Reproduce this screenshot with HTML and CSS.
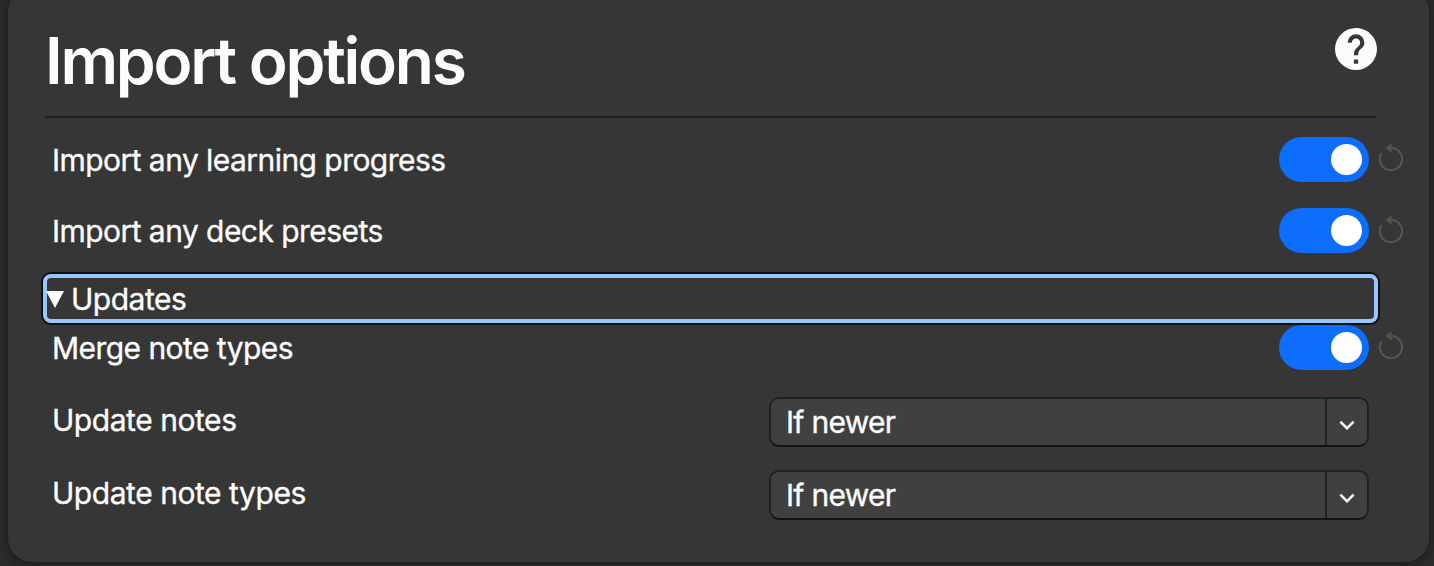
FILE: index.html
```html
<!DOCTYPE html>
<html lang="en">
<head>
<meta charset="utf-8">
<title>Import options</title>
<link rel="stylesheet" href="styles.css">
</head>
<body>
<svg class="defs" width="0" height="0" aria-hidden="true">
  <symbol id="reset" viewBox="0 0 26 30">
    <path d="M3.6 10.1A11.1 11.1 0 1 0 13.5 5" fill="none" stroke="currentColor" stroke-width="2"/>
    <path d="M7.5 4.8L13.5 .2V9.4Z" fill="currentColor"/>
  </symbol>
  <symbol id="chevron" viewBox="0 0 24 24">
    <path d="M7.41 8.58L12 13.17L16.59 8.58L18 10L12 16L6 10Z" fill="currentColor"/>
  </symbol>
</svg>
<main class="card">
  <header class="header">
    <h1 class="title">Import options</h1>
    <svg class="help" viewBox="2 2 20 20"><path fill="currentColor" d="M15.07 11.25L14.17 12.17C13.45 12.89 13 13.5 13 15H11V14.5C11 13.39 11.45 12.39 12.17 11.67L13.41 10.41C13.78 10.05 14 9.55 14 9C14 7.89 13.1 7 12 7A2 2 0 0 0 10 9H8A4 4 0 0 1 12 5A4 4 0 0 1 16 9C16 9.88 15.64 10.67 15.07 11.25M13 19H11V17H13M12 2A10 10 0 0 0 2 12A10 10 0 0 0 12 22A10 10 0 0 0 22 12C22 6.47 17.5 2 12 2Z"/></svg>
  </header>
  <section class="rows">
    <div class="row"><span class="label">Import any learning progress</span><span class="switch"><span class="knob"></span></span><svg class="reset"><use href="#reset"/></svg></div>
    <div class="row"><span class="label">Import any deck presets</span><span class="switch"><span class="knob"></span></span><svg class="reset low"><use href="#reset"/></svg></div>
  </section>
  <div class="summary"><svg class="marker" viewBox="0 0 18 17"><path d="M0 0H18L9 17Z" fill="currentColor"/></svg><span class="label">Updates</span></div>
  <section class="updates">
    <div class="row merge"><span class="label">Merge note types</span><span class="switch"><span class="knob"></span></span><svg class="reset"><use href="#reset"/></svg></div>
    <div class="row choice"><span class="label">Update notes</span><div class="select"><span class="value">If newer</span><span class="arrow"><svg class="chevron"><use href="#chevron"/></svg></span></div></div>
    <div class="row choice"><span class="label">Update note types</span><div class="select"><span class="value">If newer</span><span class="arrow"><svg class="chevron"><use href="#chevron"/></svg></span></div></div>
  </section>
</main>
</body>
</html>
```
FILE: styles.css
```css
* { box-sizing: border-box; }
body {
  margin: 0;
  height: 566px;
  overflow: hidden;
  background: #2c2c2c;
  color: #fcfcfc;
  font: 400 30px/36px Inter, sans-serif;
}
.defs { position: absolute; }
svg { display: block; flex: none; }
.card {
  width: 1421px;
  height: 574px;
  margin: -12px 0 0 8px;
  padding: 12px 25px 0 37px;
  border-radius: 24px;
  background: #363636;
  box-shadow: 0 2px 8px 2px #1e1e1e;
}
.header {
  display: flex;
  justify-content: space-between;
  width: 1331px;
  height: 118px;
  border-bottom: 2px solid #202020;
}
.title {
  margin: 22px 0 0 0;
  font-size: 64px;
  line-height: 78px;
  font-weight: 600;
  letter-spacing: -2.25px;
  white-space: nowrap;
}
.help { width: 42px; height: 42px; margin: 28px -1px 0 0; }
.rows { padding-top: 6px; }
.row {
  display: flex;
  align-items: center;
  height: 71px;
  padding-left: 7px;
}
.label, .value { -webkit-text-stroke: 0.35px currentColor; }
.label { flex: 1; white-space: nowrap; letter-spacing: -0.55px; }
.row .label { padding-top: 1px; }
.switch {
  display: flex;
  align-items: center;
  justify-content: flex-end;
  width: 90px;
  height: 45px;
  padding-right: 7px;
  border-radius: 23px;
  background: #0d6efd;
}
.knob { width: 31px; height: 31px; border-radius: 50%; background: #fff; }
.reset { width: 26px; height: 30px; margin: -4px 0 0 9px; color: #565656; }
.low { margin-top: -2px; }
.summary {
  display: flex;
  align-items: center;
  width: 1335px;
  height: 49px;
  margin: 8px 0 0 -2px;
  border: 4px solid #97c5fe;
  border-radius: 8px;
  box-shadow: 0 0 0 2px #101010;
}
.summary .label { padding-top: 1px; letter-spacing: -0.5px; }
.marker { width: 18px; height: 17px; margin: 2px 7px 0 -1px; }
.updates { padding-top: 2px; }
.merge { height: 45px; margin-bottom: 27px; }
.choice { height: 50px; margin-bottom: 23px; }
.choice .label { padding: 0 0 4px; letter-spacing: -0.45px; }
.choice .select { margin-right: 35px; }
.select {
  display: flex;
  width: 600px;
  height: 50px;
  border: 2px solid #212121;
  border-bottom-color: #121212;
  border-radius: 10px;
  background: #404040;
}
.value { flex: 1; padding: 5px 0 0 15px; letter-spacing: -0.7px; }
.arrow { width: 42px; padding: 11px 0 0 5px; border-left: 2px solid #212121; }
.chevron { width: 30px; height: 30px; }
```
